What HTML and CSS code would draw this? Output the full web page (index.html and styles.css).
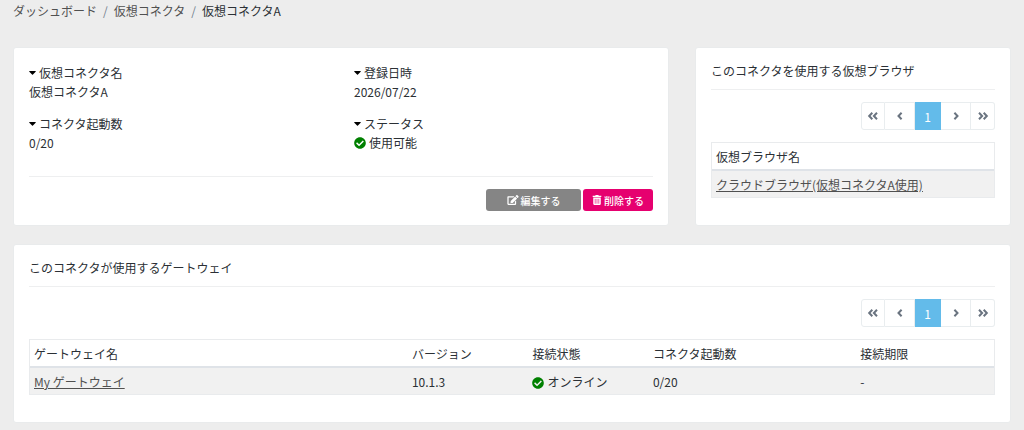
FILE: index.html
```html
<!DOCTYPE html>
<html lang="ja">
<head>
  <meta charset="UTF-8" />
  <meta name="viewport" content="width=device-width, initial-scale=1.0"/>
  <title>仮想コネクタA</title>
  <link rel="stylesheet" href="styles.css">
</head>
<body>
  <!-- shared icons -->
  <svg class="sprite" aria-hidden="true">
    <symbol id="caret" viewBox="0 0 8 6"><path d="M.7.8h6.6c.4 0 .6.5.3.8L4.500 4.800a.7.7 0 0 1-1 0L.4 1.600C.1 1.300.3.8.7.8z"/></symbol>
    <symbol id="check" viewBox="0 0 512 512"><path d="M504 256c0 137-111 248-248 248S8 393 8 256 119 8 256 8s248 111 248 248zM227.300 387.300l184-184c6.200-6.200 6.200-16.400 0-22.600l-22.600-22.600c-6.200-6.200-16.400-6.200-22.600 0L216 308.100l-70.100-70.100c-6.200-6.200-16.400-6.200-22.600 0l-22.600 22.600c-6.200 6.200-6.200 16.400 0 22.600l104 104c6.200 6.300 16.400 6.300 22.600.1z"/></symbol>
    <symbol id="edit" viewBox="0 0 576 512"><path d="M402.600 83.200l90.200 90.200c3.800 3.800 3.800 10 0 13.800L274.400 405.600l-92.800 10.300c-12.400 1.400-22.900-9.100-21.500-21.500l10.300-92.800L388.800 83.200c3.800-3.800 10-3.800 13.800 0zm162-22.900l-48.800-48.800c-15.200-15.200-39.900-15.200-55.200 0l-35.400 35.400c-3.800 3.800-3.800 10 0 13.800l90.200 90.200c3.800 3.800 10 3.800 13.800 0l35.400-35.400c15.200-15.300 15.200-40 0-55.200zM384 346.200V448H64V128h229.800c3.200 0 6.200-1.300 8.500-3.500l40-40c7.600-7.600 2.200-20.500-8.500-20.500H48C21.500 64 0 85.500 0 112v352c0 26.500 21.500 48 48 48h352c26.500 0 48-21.500 48-48V306.200c0-10.700-12.900-16-20.500-8.500l-40 40c-2.200 2.300-3.500 5.300-3.500 8.500z"/></symbol>
    <symbol id="trash" viewBox="0 0 448 512"><path fill-rule="evenodd" d="M432 32H312l-9-19c-4-8-12-13-22-13H166c-9 0-17 5-21 13l-9 19H16C7 32 0 39 0 48v32c0 9 7 16 16 16h416c9 0 16-7 16-16V48c0-9-7-16-16-16zM32 128v336c0 26 21 48 48 48h288c26 0 48-22 48-48V128zm80 80a16 16 0 0 1 32 0v224a16 16 0 0 1-32 0zm96 0a16 16 0 0 1 32 0v224a16 16 0 0 1-32 0zm96 0a16 16 0 0 1 32 0v224a16 16 0 0 1-32 0z"/></symbol>
    <symbol id="left" viewBox="0 0 6 10"><path d="M4.600 1.800L1.500 5l3.100 3.200"/></symbol>
    <symbol id="right" viewBox="0 0 6 10"><path d="M1.400 1.800L4.500 5 1.400 8.200"/></symbol>
    <symbol id="first" viewBox="0 0 12 10"><path d="M5.300 1.800L2.200 5l3.100 3.200M10 1.800L6.900 5 10 8.200"/></symbol>
    <symbol id="last" viewBox="0 0 12 10"><path d="M2 1.800L5.100 5 2 8.200M6.700 1.800L9.800 5 6.700 8.200"/></symbol>
  </svg>

  <nav class="breadcrumb">
    <a href="#">ダッシュボード</a>
    <span class="slash">/</span>
    <a href="#">仮想コネクタ</a>
    <span class="slash">/</span>
    <span>仮想コネクタA</span>
  </nav>

  <main class="content">
    <section class="card detail">
      <dl class="info">
        <div>
          <dt><svg class="caret"><use href="#caret"/></svg>仮想コネクタ名</dt>
          <dd>仮想コネクタA</dd>
        </div>
        <div>
          <dt><svg class="caret"><use href="#caret"/></svg>登録日時</dt>
          <dd>2026/07/22</dd>
        </div>
        <div>
          <dt><svg class="caret"><use href="#caret"/></svg>コネクタ起動数</dt>
          <dd>0/20</dd>
        </div>
        <div>
          <dt><svg class="caret"><use href="#caret"/></svg>ステータス</dt>
          <dd><svg class="check"><use href="#check"/></svg>使用可能</dd>
        </div>
      </dl>
      <div class="actions">
        <button type="button" class="edit"><svg><use href="#edit"/></svg>編集する</button>
        <button type="button" class="delete"><svg><use href="#trash"/></svg>削除する</button>
      </div>
    </section>

    <section class="card">
      <h2>このコネクタを使用する仮想ブラウザ</h2>
      <nav class="pagination">
        <a href="#" aria-label="最初"><svg class="wide"><use href="#first"/></svg></a>
        <a href="#" class="step" aria-label="前へ"><svg><use href="#left"/></svg></a>
        <a href="#" class="active">1</a>
        <a href="#" class="step" aria-label="次へ"><svg><use href="#right"/></svg></a>
        <a href="#" aria-label="最後"><svg class="wide"><use href="#last"/></svg></a>
      </nav>
      <table>
        <thead>
          <tr><th>仮想ブラウザ名</th></tr>
        </thead>
        <tbody>
          <tr><td><a href="#">クラウドブラウザ(仮想コネクタA使用)</a></td></tr>
        </tbody>
      </table>
    </section>

    <section class="card full">
      <h2>このコネクタが使用するゲートウェイ</h2>
      <nav class="pagination">
        <a href="#" aria-label="最初"><svg class="wide"><use href="#first"/></svg></a>
        <a href="#" class="step" aria-label="前へ"><svg><use href="#left"/></svg></a>
        <a href="#" class="active">1</a>
        <a href="#" class="step" aria-label="次へ"><svg><use href="#right"/></svg></a>
        <a href="#" aria-label="最後"><svg class="wide"><use href="#last"/></svg></a>
      </nav>
      <table class="gateways">
        <thead>
          <tr>
            <th class="name">ゲートウェイ名</th>
            <th class="version">バージョン</th>
            <th class="state">接続状態</th>
            <th class="count">コネクタ起動数</th>
            <th>接続期限</th>
          </tr>
        </thead>
        <tbody>
          <tr>
            <td><a href="#">My ゲートウェイ</a></td>
            <td>10.1.3</td>
            <td><svg class="check"><use href="#check"/></svg>オンライン</td>
            <td>0/20</td>
            <td>-</td>
          </tr>
        </tbody>
      </table>
    </section>
  </main>
</body>
</html>
```

FILE: styles.css
```css
* {
  box-sizing: border-box;
}
body {
  margin: 0;
  padding: 0 13px 8px;
  background: #ededed;
  color: #2b3035;
  font-family: "Noto Sans CJK JP", sans-serif;
  font-size: 12px;
  line-height: 19px;
}
a {
  color: #505050;
}
.sprite {
  position: absolute;
  width: 0;
  height: 0;
}
.breadcrumb {
  display: flex;
  gap: 6px;
  padding-top: 1px;
  margin-bottom: 27px;
}
.breadcrumb a {
  text-decoration: none;
}
.slash {
  color: #73818f;
}

/* cards */
.content {
  display: grid;
  grid-template-columns: 656fr 316fr;
  gap: 18px 26px;
}
.card {
  min-width: 0;
  padding: 13px 15px 27px;
  background: #fff;
  border: 1px solid #e9ebec;
  border-radius: 3px;
}
.full {
  grid-column: 1 / -1;
}
h2 {
  margin: 0 0 12px;
  padding-bottom: 9px;
  border-bottom: 1px solid #eeeff0;
  font-size: 12px;
  font-weight: 400;
}

/* connector details */
.detail {
  display: flex;
  flex-direction: column;
  padding: 15px 15px 14px;
}
.info {
  display: grid;
  grid-template-columns: 1fr 1fr;
  gap: 13px 26px;
  margin: 0;
}
dt, dd {
  display: flex;
  align-items: center;
  margin: 0;
}
.caret {
  width: 7px;
  height: 6px;
  margin-right: 3px;
}
.check {
  width: 12px;
  height: 12px;
  margin-right: 3px;
  fill: #008000;
}
.actions {
  display: flex;
  justify-content: flex-end;
  gap: 2px;
  margin-top: auto;
  padding-top: 12px;
  border-top: 1px solid #eeeff0;
}
button {
  display: flex;
  align-items: center;
  justify-content: center;
  gap: 2px;
  height: 22px;
  padding: 0 9px;
  border: none;
  border-radius: 3px;
  color: #fff;
  font-family: inherit;
  font-size: 10px;
  font-weight: 500;
  cursor: pointer;
}
button svg {
  width: 10px;
  height: 10px;
  fill: #fff;
}
.edit {
  width: 95px;
  background: #858585;
}
.edit svg {
  width: 12px;
}
.delete {
  background: #e6006f;
}

/* pagination */
.pagination {
  display: flex;
  justify-content: flex-end;
  margin-bottom: 12px;
}
.pagination a {
  display: flex;
  align-items: center;
  justify-content: center;
  width: 24px;
  height: 28px;
  border: 1px solid #e9edef;
  border-left: none;
  color: #fff;
  text-decoration: none;
}
.pagination a:first-child {
  border-left: 1px solid #e9edef;
  border-radius: 3px 0 0 3px;
}
.pagination a:last-child {
  border-radius: 0 3px 3px 0;
}
.pagination .step {
  width: 30px;
}
.pagination .active {
  width: 26px;
  background: #63bbea;
  border-color: #63bbea;
}
.pagination svg {
  width: 6px;
  height: 10px;
  fill: none;
  stroke: #6a7480;
  stroke-width: 2;
}
.pagination .wide {
  width: 12px;
}

/* tables */
table {
  width: 100%;
  border: 1px solid #e9ebed;
  border-spacing: 0;
}
th, td {
  padding: 4px;
  text-align: left;
  font-weight: 400;
}
th {
  padding-bottom: 3px;
  border-bottom: 2px solid #dfe3e8;
}
td {
  padding-bottom: 3px;
  background: #f1f1f1;
}
td .check {
  vertical-align: -2px;
}
.gateways {
  table-layout: fixed;
}
.name {
  width: 39.2%;
}
.version, .state {
  width: 12.5%;
}
.count {
  width: 21.5%;
}
```
